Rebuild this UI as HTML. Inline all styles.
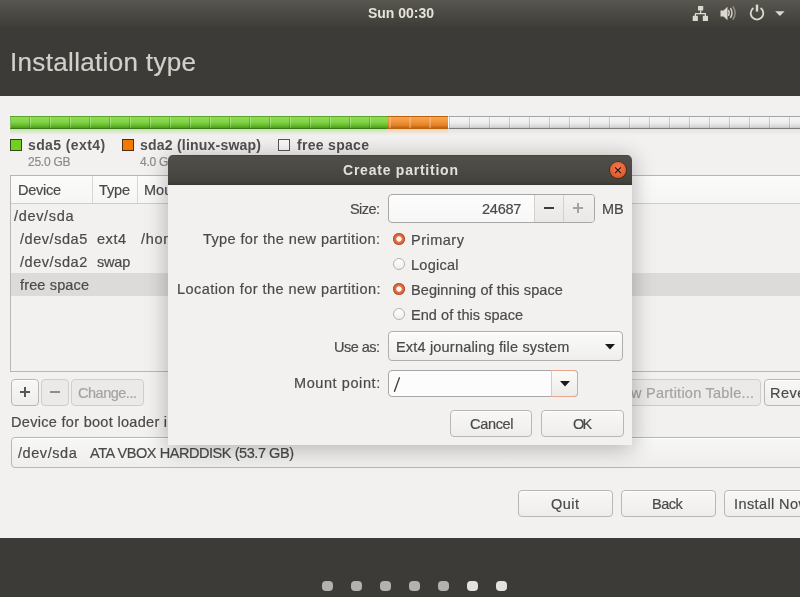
<!DOCTYPE html>
<html><head><meta charset="utf-8"><style>
*{margin:0;padding:0;box-sizing:border-box}
html,body{width:800px;height:597px;overflow:hidden;background:#f2f1f0;font-family:"Liberation Sans",sans-serif;color:#4a4a4a;position:relative}
div{position:absolute}
.t{white-space:nowrap;-webkit-text-stroke:0.2px currentColor;will-change:transform}
.btn{border:1px solid #b9b7b3;border-radius:4px;background:linear-gradient(#f8f8f7,#eeedeb);box-shadow:inset 0 1px 0 #fff}
.ibtn{border:1px solid #d0cecb;border-radius:4px;background:#ebeae8}
.dot{top:581px;width:11px;height:10px;border-radius:4px;background:#b2b2ae}
.radio{width:12px;height:12px;border-radius:50%}
.ron{background:radial-gradient(circle at 50% 50%,#fff 0,#fdf6f2 2.3px,#e8784e 3px,#d45d30 5.2px,#c4532a 6px);box-shadow:inset 0 0 0 0.6px rgba(170,70,30,0.8)}
.roff{background:linear-gradient(#fff,#f0efee);border:1px solid #b4b2ae}
</style></head><body>
<div style="left:0;top:0;width:800px;height:28px;background:linear-gradient(#58564f,#3d3c38)"></div><div style="left:0;top:28px;width:800px;height:68px;background:#3c3b37"></div><div class="t" style="top:5px;font-size:14px;line-height:16px;color:#e6e2da;font-weight:bold;-webkit-text-stroke:0;letter-spacing:-0.012px;left:368.00px;">Sun 00:30</div>
<div class="t" style="top:47px;font-size:26px;line-height:30px;color:#d3d0c9;letter-spacing:0.331px;left:10.00px;">Installation type</div>
<svg style="position:absolute;left:690px;top:3px" width="100" height="22" viewBox="690 3 100 22"><g fill="#dcd8d0"><rect x="698" y="6" width="5.2" height="4.5"/><rect x="700" y="10.5" width="1.3" height="3"/><rect x="695" y="13" width="11" height="1.3"/><rect x="694.7" y="14" width="1.3" height="2"/><rect x="704.7" y="14" width="1.3" height="2"/><rect x="692.7" y="15.8" width="5.2" height="5.2"/><rect x="702.8" y="15.8" width="5.2" height="5.2"/><path d="M720.5 10.5H723.5L727.5 6.8V20.2L723.5 16.5H720.5Z"/></g><g fill="none" stroke="#dcd8d0" stroke-width="1.4"><path d="M728.3 10.2Q730.2 13 728.3 15.8"/><path d="M730.4 8.2Q733.6 13 730.4 17.8"/></g><path d="M732.8 6.4Q737.4 13 732.8 19.6" fill="none" stroke="#8f8c86" stroke-width="1.5"/><g fill="none" stroke="#dcd8d0" stroke-width="1.8"><path d="M753.4 8.1A6.3 6.3 0 1 0 760.6 8.1"/><path d="M757 4.6V11.6" stroke-width="2.4"/></g><path d="M775.2 11.2H784.6L779.9 15.9Z" fill="#dcd8d0"/></svg><div style="left:10px;top:116px;width:377px;height:13px;background:linear-gradient(#8fdc52,#84d447 45%,#62b82a 80%,#4a9a1c);border:1px solid #5aa52e;border-bottom-color:#3b7a14;border-right:none"></div><div style="left:387px;top:116px;width:61px;height:13px;background:linear-gradient(#f7a54c,#f0943a 45%,#e07c22 80%,#b85f10);border:1px solid #b9620f;border-left:none;border-right:none"></div><div style="left:448px;top:116px;width:360px;height:13px;background:linear-gradient(#f6f6f6,#eeeeee 50%,#dadada 85%,#c4c4c4);border:1px solid #a4a4a4;border-bottom-color:#7c7c7c;border-left:1px solid #fff"></div><div style="left:10px;top:117px;width:790px;height:11px;background:repeating-linear-gradient(90deg,rgba(255,255,255,0.25) 0,rgba(255,255,255,0.25) 1px,transparent 1px,transparent 19px,rgba(0,0,0,0.17) 19px,rgba(0,0,0,0.17) 20px)"></div><div style="left:388px;top:117px;width:60px;height:11px;background:repeating-linear-gradient(90deg,transparent 0,transparent 1px,rgba(255,210,150,0.5) 1px,rgba(255,210,150,0.5) 2px,transparent 2px,transparent 20px)"></div><div style="left:10px;top:129px;width:377px;height:6px;background:linear-gradient(rgba(110,200,60,0.35),rgba(110,200,60,0))"></div><div style="left:387px;top:129px;width:61px;height:6px;background:linear-gradient(rgba(240,150,60,0.35),rgba(240,150,60,0))"></div><div style="left:448px;top:129px;width:352px;height:6px;background:linear-gradient(rgba(0,0,0,0.06),rgba(0,0,0,0))"></div><div style="left:10px;top:139px;width:12px;height:12px;background:#72d01f;border:1px solid #2f4a1c"></div><div class="t" style="top:137px;font-size:14px;line-height:16px;color:#505050;font-weight:bold;-webkit-text-stroke:0;letter-spacing:0.390px;left:28.30px;">sda5 (ext4)</div>
<div class="t" style="top:155px;font-size:12px;line-height:14px;color:#8b8b8b;letter-spacing:-0.250px;left:28.30px;">25.0 GB</div>
<div style="left:122px;top:139px;width:12px;height:12px;background:#f57900;border:1px solid #4d3210"></div><div class="t" style="top:137px;font-size:14px;line-height:16px;color:#505050;font-weight:bold;-webkit-text-stroke:0;letter-spacing:0.219px;left:140.00px;">sda2 (linux-swap)</div>
<div class="t" style="top:155px;font-size:12px;line-height:14px;color:#8b8b8b;letter-spacing:-0.280px;left:140.00px;">4.0 GB</div>
<div style="left:278px;top:139px;width:12px;height:12px;background:#f8f8f8;border:1px solid #555"></div><div class="t" style="top:137px;font-size:14px;line-height:16px;color:#505050;font-weight:bold;-webkit-text-stroke:0;letter-spacing:0.300px;left:297.00px;">free space</div>
<div style="left:10px;top:175px;width:800px;height:197px;border:1px solid #b8b6b2;background:#f2f1f0"></div><div style="left:11px;top:176px;width:789px;height:28px;background:linear-gradient(#fbfbfa,#f6f6f5);border-bottom:1px solid #cfcdca"></div><div style="left:92px;top:176px;width:1px;height:27px;background:#d9d7d4"></div><div style="left:137px;top:176px;width:1px;height:27px;background:#d9d7d4"></div><div class="t" style="top:182px;font-size:14.5px;line-height:16px;color:#4a4a4a;letter-spacing:-0.260px;left:17.50px;">Device</div>
<div class="t" style="top:182px;font-size:14.5px;line-height:16px;color:#4a4a4a;letter-spacing:-0.133px;left:99.20px;">Type</div>
<div class="t" style="top:182px;font-size:14.5px;line-height:16px;color:#4a4a4a;left:143.60px;">Mount point</div>
<div style="left:11px;top:273px;width:789px;height:23px;background:#dcdbd9"></div><div class="t" style="top:208px;font-size:14.5px;line-height:16px;color:#4a4a4a;letter-spacing:0.671px;left:14.00px;">/dev/sda</div>
<div class="t" style="top:231px;font-size:14.5px;line-height:16px;color:#4a4a4a;letter-spacing:0.550px;left:20.00px;">/dev/sda5</div>
<div class="t" style="top:231px;font-size:14.5px;line-height:16px;color:#4a4a4a;letter-spacing:0.533px;left:97.00px;">ext4</div>
<div class="t" style="top:231px;font-size:14.5px;line-height:16px;color:#4a4a4a;letter-spacing:0.675px;left:141.00px;">/home</div>
<div class="t" style="top:254px;font-size:14.5px;line-height:16px;color:#4a4a4a;letter-spacing:0.550px;left:20.00px;">/dev/sda2</div>
<div class="t" style="top:254px;font-size:14.5px;line-height:16px;color:#4a4a4a;letter-spacing:-0.200px;left:97.00px;">swap</div>
<div class="t" style="top:277px;font-size:14.5px;line-height:16px;color:#4a4a4a;letter-spacing:0.144px;left:20.20px;">free space</div>
<div class="btn" style="left:11px;top:379px;width:28px;height:27px"></div><div style="left:20px;top:391px;width:10px;height:2px;background:#565656"></div><div style="left:24px;top:387px;width:2px;height:10px;background:#565656"></div><div class="ibtn" style="left:41px;top:379px;width:28px;height:27px"></div><div style="left:50px;top:391px;width:10px;height:2px;background:#8c8c8c"></div><div class="ibtn" style="left:71px;top:379px;width:73px;height:27px"></div><div class="t" style="top:385px;font-size:14.5px;line-height:16px;color:#a3a3a3;letter-spacing:-0.487px;left:78.00px;">Change...</div>
<div class="ibtn" style="left:560px;top:379px;width:201px;height:27px"></div><div class="t" style="top:385px;font-size:14.5px;line-height:16px;color:#a3a3a3;letter-spacing:0.252px;left:612.30px;">New Partition Table...</div>
<div class="btn" style="left:764px;top:379px;width:80px;height:27px"></div><div class="t" style="top:385px;font-size:14.5px;line-height:16px;color:#4a4a4a;letter-spacing:0.460px;left:769.60px;">Revert</div>
<div class="t" style="top:414px;font-size:14.5px;line-height:16px;color:#4a4a4a;letter-spacing:0.303px;left:10.80px;">Device for boot loader installation:</div>
<div class="btn" style="left:11px;top:437px;width:800px;height:31px;background:linear-gradient(#f7f7f6,#efeeed);box-shadow:inset 0 1px 0 #fff"></div><div class="t" style="top:445px;font-size:14.5px;line-height:16px;color:#4a4a4a;letter-spacing:0.571px;left:18.00px;">/dev/sda</div>
<div class="t" style="top:445px;font-size:14.5px;line-height:16px;color:#4a4a4a;letter-spacing:-0.438px;left:90.00px;">ATA VBOX HARDDISK (53.7 GB)</div>
<div class="btn" style="left:518px;top:490px;width:95px;height:27px"></div><div class="t" style="top:496px;font-size:14.5px;line-height:16px;color:#4a4a4a;letter-spacing:0.467px;left:551.40px;">Quit</div>
<div class="btn" style="left:621px;top:490px;width:95px;height:27px"></div><div class="t" style="top:496px;font-size:14.5px;line-height:16px;color:#4a4a4a;letter-spacing:-0.500px;left:652.20px;">Back</div>
<div class="btn" style="left:724px;top:490px;width:95px;height:27px"></div><div class="t" style="top:496px;font-size:14.5px;line-height:16px;color:#4a4a4a;letter-spacing:0.400px;left:734.30px;">Install Now</div>
<div style="left:168px;top:155px;width:464px;height:290px;border-radius:5px 5px 0 0;box-shadow:0 3px 22px 1px rgba(0,0,0,0.27);background:#f2f1f0"></div><div style="left:168px;top:155px;width:464px;height:30px;border-radius:5px 5px 0 0;background:linear-gradient(#403f3b 0,#504e49 1.5px,#4b4a45 45%,#42413c 90%,#363531 100%)"></div><div class="t" style="top:162px;font-size:14px;line-height:16px;color:#e4e1da;font-weight:bold;-webkit-text-stroke:0;letter-spacing:0.767px;left:342.50px;">Create partition</div>
<div style="left:609.7px;top:161.9px;width:16px;height:16px;border-radius:50%;background:radial-gradient(circle at 50% 35%,#f27a4e,#e35e2f 65%,#cf4f24);box-shadow:0 0 0 0.8px #4a2416"></div><svg style="position:absolute;left:609px;top:161.4px" width="18" height="18" viewBox="0 0 18 18"><path d="M6.1 6.3L11.9 12.1M11.9 6.3L6.1 12.1" stroke="#1e120c" stroke-width="1.05"/></svg><div class="t" style="top:201px;font-size:14.5px;line-height:16px;color:#4a4a4a;letter-spacing:-0.550px;left:350.40px;">Size:</div>
<div class="t" style="top:231px;font-size:14.5px;line-height:16px;color:#4a4a4a;letter-spacing:0.392px;left:203.40px;">Type for the new partition:</div>
<div class="t" style="top:281px;font-size:14.5px;line-height:16px;color:#4a4a4a;letter-spacing:0.443px;left:176.90px;">Location for the new partition:</div>
<div class="t" style="top:339px;font-size:14.5px;line-height:16px;color:#4a4a4a;letter-spacing:-0.533px;left:334.40px;">Use as:</div>
<div class="t" style="top:375px;font-size:14.5px;line-height:16px;color:#4a4a4a;letter-spacing:0.582px;left:294.20px;">Mount point:</div>
<div style="left:388px;top:194px;width:207px;height:29px;border:1px solid #a9a7a3;border-radius:4px;background:linear-gradient(#fcfcfc,#f7f7f7)"></div><div style="left:534px;top:195px;width:60px;height:27px;border-radius:0 3px 3px 0;background:linear-gradient(#f3f2f1,#e9e8e6);border-left:1px solid #d3d1ce"></div><div style="left:563px;top:195px;width:1px;height:27px;background:#d3d1ce"></div><div class="t" style="top:201px;font-size:14.5px;line-height:16px;color:#4a4a4a;letter-spacing:-0.250px;left:482.30px;">24687</div>
<div style="left:544px;top:207px;width:10px;height:2px;background:#3c3c3c"></div><div style="left:573px;top:207px;width:10px;height:2px;background:#a3a3a3"></div><div style="left:577px;top:203px;width:2px;height:10px;background:#a3a3a3"></div><div class="t" style="top:201px;font-size:14.5px;line-height:16px;color:#4a4a4a;letter-spacing:-0.200px;left:602.40px;">MB</div>
<div class="radio ron" style="left:393px;top:233px"></div><div class="t" style="top:232px;font-size:14.5px;line-height:16px;color:#4a4a4a;letter-spacing:0.500px;left:410.50px;">Primary</div>
<div class="radio roff" style="left:393px;top:258px"></div><div class="t" style="top:257px;font-size:14.5px;line-height:16px;color:#4a4a4a;letter-spacing:0.267px;left:410.50px;">Logical</div>
<div class="radio ron" style="left:393px;top:283px"></div><div class="t" style="top:282px;font-size:14.5px;line-height:16px;color:#4a4a4a;letter-spacing:0.086px;left:410.50px;">Beginning of this space</div>
<div class="radio roff" style="left:393px;top:308px"></div><div class="t" style="top:307px;font-size:14.5px;line-height:16px;color:#4a4a4a;letter-spacing:0.050px;left:410.50px;">End of this space</div>
<div class="btn" style="left:388px;top:331px;width:235px;height:30px;background:linear-gradient(#fbfbfa,#efeeed);border-color:#b0aeaa"></div><div class="t" style="top:339px;font-size:14.5px;line-height:16px;color:#4a4a4a;letter-spacing:0.185px;left:395.50px;">Ext4 journaling file system</div>
<svg style="position:absolute;left:605px;top:344px" width="10" height="6" viewBox="0 0 10 6"><path d="M0 0H10L5 5.5Z" fill="#1a1a1a"/></svg><div style="left:388px;top:370px;width:190px;height:27px;border:1px solid #a9a7a3;border-radius:4px;background:#fcfcfc"></div><div style="left:551px;top:370px;width:27px;height:27px;border:1px solid #e9a48c;border-left-color:#cfcdc9;border-radius:0 4px 4px 0;background:linear-gradient(#fbfbfa,#ecebe9)"></div><svg style="position:absolute;left:390px;top:374px" width="14" height="20" viewBox="390 374 14 20"><path d="M399.4 377.8L394.5 391.3" stroke="#3e3e3e" stroke-width="1.35" stroke-linecap="round"/></svg><svg style="position:absolute;left:560px;top:381px" width="10" height="6" viewBox="0 0 10 6"><path d="M0 0H10L5 5.5Z" fill="#1a1a1a"/></svg><div class="btn" style="left:450px;top:410px;width:82px;height:27px"></div><div class="t" style="top:416px;font-size:14.5px;line-height:16px;color:#4a4a4a;letter-spacing:-0.320px;left:469.50px;">Cancel</div>
<div class="btn" style="left:541px;top:410px;width:83px;height:27px"></div><div class="t" style="top:416px;font-size:14.5px;line-height:16px;color:#4a4a4a;letter-spacing:-1.800px;left:572.50px;">OK</div>
<div style="left:0;top:538px;width:800px;height:59px;background:#3c3b37"></div><div class="dot" style="left:322px;background:#b2b2ae"></div><div class="dot" style="left:351px;background:#b2b2ae"></div><div class="dot" style="left:380px;background:#b2b2ae"></div><div class="dot" style="left:409px;background:#b2b2ae"></div><div class="dot" style="left:438px;background:#b2b2ae"></div><div class="dot" style="left:467px;background:#e2e2de"></div><div class="dot" style="left:496px;background:#e2e2de"></div>
</body></html>
